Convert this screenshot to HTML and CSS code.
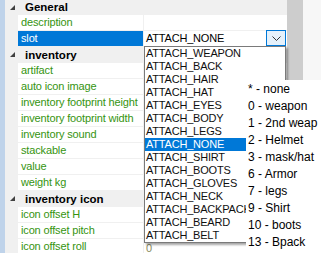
FILE: index.html
```html
<!DOCTYPE html>
<html>
<head>
<title>Properties</title>
<link rel="stylesheet" href="styles.css">
</head>
<body>
<div class="window">
  <div class="edge"></div>
  <div class="grid">
    <div class="row cat first">
      <span class="toggle"><svg width="5" height="5" viewBox="0 0 5 5"><polygon points="5,0 5,5 0,5"/></svg></span>
      <span class="cat-name">General</span>
    </div>
    <div class="row prop"><span class="gutter"></span><span class="name">description</span><span class="value"></span></div>
    <div class="row prop selected">
      <span class="gutter"></span><span class="name">slot</span>
      <span class="value">ATTACH_NONE
        <span class="drop-btn"><svg width="9" height="5" viewBox="0 0 9 5"><polyline points="0.5,0.5 4.5,4.5 8.5,0.5"/></svg></span>
      </span>
    </div>
    <div class="row cat">
      <span class="toggle"><svg width="5" height="5" viewBox="0 0 5 5"><polygon points="5,0 5,5 0,5"/></svg></span>
      <span class="cat-name">inventory</span>
    </div>
    <div class="row prop"><span class="gutter"></span><span class="name">artifact</span><span class="value"></span></div>
    <div class="row prop"><span class="gutter"></span><span class="name">auto icon image</span><span class="value"></span></div>
    <div class="row prop"><span class="gutter"></span><span class="name">inventory footprint height</span><span class="value"></span></div>
    <div class="row prop"><span class="gutter"></span><span class="name">inventory footprint width</span><span class="value"></span></div>
    <div class="row prop"><span class="gutter"></span><span class="name">inventory sound</span><span class="value"></span></div>
    <div class="row prop"><span class="gutter"></span><span class="name">stackable</span><span class="value"></span></div>
    <div class="row prop"><span class="gutter"></span><span class="name">value</span><span class="value"></span></div>
    <div class="row prop"><span class="gutter"></span><span class="name">weight kg</span><span class="value"></span></div>
    <div class="row cat">
      <span class="toggle"><svg width="5" height="5" viewBox="0 0 5 5"><polygon points="5,0 5,5 0,5"/></svg></span>
      <span class="cat-name">inventory icon</span>
    </div>
    <div class="row prop"><span class="gutter"></span><span class="name">icon offset H</span><span class="value"></span></div>
    <div class="row prop"><span class="gutter"></span><span class="name">icon offset pitch</span><span class="value"></span></div>
    <div class="row prop"><span class="gutter"></span><span class="name">icon offset roll</span><span class="value dim"><span class="low">0</span></span></div>
  </div>
  <div class="scrollbar"></div>
  <div class="side"></div>

  <ul class="dropdown">
    <li>ATTACH_WEAPON</li>
    <li>ATTACH_BACK</li>
    <li>ATTACH_HAIR</li>
    <li>ATTACH_HAT</li>
    <li>ATTACH_EYES</li>
    <li>ATTACH_BODY</li>
    <li>ATTACH_LEGS</li>
    <li class="active">ATTACH_NONE</li>
    <li>ATTACH_SHIRT</li>
    <li>ATTACH_BOOTS</li>
    <li>ATTACH_GLOVES</li>
    <li>ATTACH_NECK</li>
    <li>ATTACH_BACKPACK</li>
    <li>ATTACH_BEARD</li>
    <li>ATTACH_BELT</li>
  </ul>

  <div class="note">
    <div>* - none</div>
    <div>0 - weapon</div>
    <div>1 - 2nd weap</div>
    <div>2 - Helmet</div>
    <div>3 - mask/hat</div>
    <div>6 - Armor</div>
    <div>7 - legs</div>
    <div>9 - Shirt</div>
    <div>10 - boots</div>
    <div>13 - Bpack</div>
  </div>
</div>
</body>
</html>
```

FILE: styles.css
```css
body {
    margin: 0;
    padding: 0;
    background: #ffffff;
    font-family: "Liberation Sans", Arial, sans-serif;
}

.window {
    position: relative;
    width: 321px;
    height: 253px;
    overflow: hidden;
    display: flex;
}

.edge {
    width: 5px;
    background: #bfd3ea;
}

.grid {
    width: 282px;
    display: flex;
    flex-direction: column;
    background: #f0f0f0;
}

.row {
    display: flex;
    height: 15px;
    border-bottom: 1px solid #f0f0f0;
    flex-shrink: 0;
}

.row.first {
    height: 14px;
}

.cat {
    background: #f0f0f0;
    align-items: center;
}

.toggle {
    width: 20px;
    display: flex;
    justify-content: flex-start;
    padding-left: 5px;
    box-sizing: border-box;
}

.toggle polygon {
    fill: #404040;
}

.cat-name {
    font-weight: bold;
    font-size: 11.5px;
    color: #000;
}

.gutter {
    width: 13px;
    background: #f0f0f0;
}

.name {
    width: 126px;
    background: #fff;
    color: #359410;
    font-size: 11px;
    letter-spacing: -0.15px;
    line-height: 15px;
    padding-left: 3px;
    box-sizing: border-box;
    border-right: 1px solid #f0f0f0;
    white-space: nowrap;
    overflow: hidden;
}

.value {
    flex: 1;
    background: #fff;
    font-size: 11px;
    letter-spacing: -0.2px;
    line-height: 15px;
    padding-left: 2px;
    display: flex;
    align-items: center;
    color: #000;
}

.value.dim {
    color: #8a8a60;
    align-items: flex-start;
}

.low {
    padding-top: 4px;
    line-height: 11px;
}

.selected .name {
    background: #0078d7;
    color: #fff;
}

.drop-btn {
    margin-left: auto;
    width: 18px;
    height: 14px;
    margin-top: -1px;
    border: 1px solid #0078d7;
    background: #e5f1fb;
    display: flex;
    align-items: center;
    justify-content: center;
    margin-right: 1px;
}

.drop-btn polyline {
    fill: none;
    stroke: #333;
    stroke-width: 1;
}

.scrollbar {
    width: 16px;
    background: #cdcdcd;
}

.side {
    flex: 1;
    background: #f7f7f7;
}

.dropdown {
    position: absolute;
    left: 144px;
    top: 46px;
    width: 140px;
    margin: 0;
    padding: 0;
    list-style: none;
    background: #fff;
    border: 1px solid #7a7a7a;
    box-shadow: 2px 2px 2px rgba(0, 0, 0, 0.35);
    font-size: 11px;
    letter-spacing: -0.2px;
    color: #101010;
}

.dropdown li {
    height: 13px;
    line-height: 13px;
    padding-left: 1px;
}

.dropdown li.active {
    background: #0078d7;
    color: #fff;
}

.note {
    position: absolute;
    left: 246px;
    top: 80px;
    right: 0;
    bottom: 0;
    background: #fff;
    padding: 1px 0 0 2px;
    font-size: 12px;
    line-height: 17px;
    color: #000;
    white-space: nowrap;
}
```
